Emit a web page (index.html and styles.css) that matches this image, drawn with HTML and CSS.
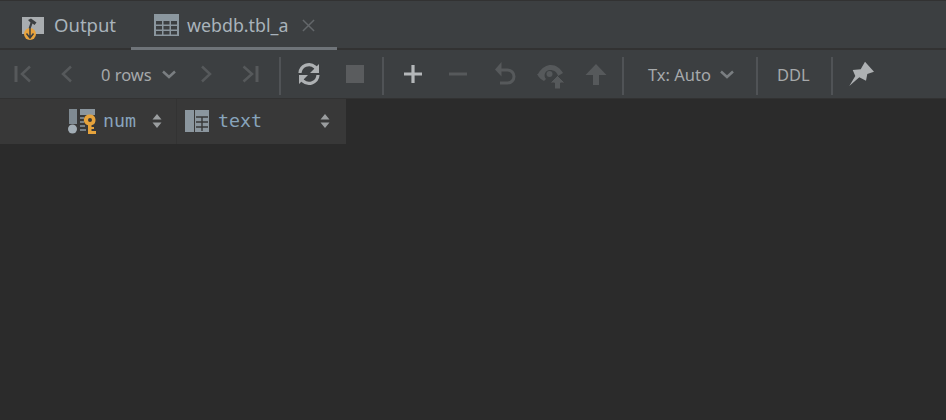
FILE: index.html
```html
<!DOCTYPE html>
<html lang="en">
<head>
<meta charset="utf-8">
<title>webdb.tbl_a</title>
<link rel="stylesheet" href="styles.css">
</head>
<body>
<div class="tabs">
  <div class="tab tab-output">
    <svg class="tab-icon" width="24" height="24" viewBox="0 0 24 24">
      <rect x="1" y="4" width="22" height="17" fill="#a9adb0"/>
      <path d="M7 7l3-1.500 5.500 4-2 2.500-2-1.500-2 5.500-2-.5 2-6z" fill="#3c3f41"/>
      <circle cx="9" cy="21" r="6" fill="#e8a33d"/>
      <path d="M9 15v10M5.500 20.500L9 25l3.500-4.500" fill="none" stroke="#3c3f41" stroke-width="1.500"/>
    </svg>
    <span class="output-label">Output</span>
  </div>
  <div class="tab tab-active">
    <svg class="tab-icon" width="25" height="22" viewBox="0 0 25 22">
      <rect x="0" y="0" width="25" height="22" fill="#8b979f"/>
      <g fill="#3c3f41">
        <rect x="2" y="7" width="6" height="3.500"/><rect x="9.500" y="7" width="6" height="3.500"/><rect x="17" y="7" width="6" height="3.500"/>
        <rect x="2" y="12" width="6" height="3.500"/><rect x="9.500" y="12" width="6" height="3.500"/><rect x="17" y="12" width="6" height="3.500"/>
        <rect x="2" y="17" width="6" height="3.500"/><rect x="9.500" y="17" width="6" height="3.500"/><rect x="17" y="17" width="6" height="3.500"/>
      </g>
    </svg>
    <span>webdb.tbl_a</span>
    <svg class="tab-close" width="13" height="13" viewBox="0 0 14 14"><path d="M1 1l12 12M13 1L1 13" stroke="#63676a" stroke-width="1.600" fill="none"/></svg>
  </div>
</div>
<div class="toolbar">
  <div class="btn"><svg width="20" height="20" viewBox="0 0 20 20"><path d="M3 2v16" stroke="#56595b" stroke-width="3"/><path d="M17 2.500L9 10l8 7.500" stroke="#56595b" stroke-width="2.500" fill="none"/></svg></div>
  <div class="btn"><svg width="20" height="20" viewBox="0 0 20 20"><path d="M13 2.500L5 10l8 7.500" stroke="#56595b" stroke-width="2.500" fill="none"/></svg></div>
  <div class="rows"><span>0 rows</span><svg class="chev" width="14" height="9" viewBox="0 0 14 9"><path d="M1 1.500l6 5.500 6-5.500" stroke="#7a7e81" stroke-width="2.500" fill="none"/></svg></div>
  <div class="btn"><svg width="20" height="20" viewBox="1 0 20 20"><path d="M6 2.500L14 10l-8 7.500" stroke="#56595b" stroke-width="2.500" fill="none"/></svg></div>
  <div class="btn"><svg width="20" height="20" viewBox="1 0 20 20"><path d="M16 2v16" stroke="#56595b" stroke-width="3"/><path d="M2.500 2.500L11 10l-8.500 7.500" stroke="#56595b" stroke-width="2.500" fill="none"/></svg></div>
  <div class="sep sep-a"></div>
  <div class="btn"><svg width="22" height="22" viewBox="2 1 22 22"><g fill="none" stroke="#aeb1b3" stroke-width="3.200"><path d="M3 11a9 9 0 0 1 15-6l2 2"/><path d="M21 13a9 9 0 0 1-15 6l-2-2"/></g><path d="M22 2v9h-9zM2 22v-9h9z" fill="#aeb1b3"/></svg></div>
  <div class="btn"><div class="stop"></div></div>
  <div class="sep sep-b"></div>
  <div class="btn"><svg width="20" height="20" viewBox="0 0 20 20"><path d="M10 1v18M1 10h18" stroke="#b4b7b9" stroke-width="3.200"/></svg></div>
  <div class="btn"><svg width="20" height="20" viewBox="0 0 20 20"><path d="M1 10h18" stroke="#56595b" stroke-width="3"/></svg></div>
  <div class="btn btn-undo"><svg width="24" height="24" viewBox="1 0 24 24"><path d="M6 8h8.500a6.500 6.500 0 0 1 0 13H7" stroke="#56595b" stroke-width="3" fill="none"/><path d="M8.500 0L2 7.500l6.500 7z" fill="#56595b"/></svg></div>
  <div class="btn"><svg class="over" width="28" height="26" viewBox="0 0 28 26"><path d="M1 13C5 6 10 4 14 4c5 0 9 3 12 8l-5 3c-1-4-4-6-8-6-5 0-7 6-4 9l-2 2c-2-1-5-3-7-7z" fill="#56595b"/><circle cx="12.500" cy="13" r="3" fill="#56595b"/><path d="M20.500 14.500L28 22h-4.500v6h-6v-6H13z" fill="#56595b" stroke="#3c3f41" stroke-width="1"/></svg></div>
  <div class="btn"><svg width="24" height="24" viewBox="0 0 24 24"><path d="M12 2l10.500 11H15v10H9V13H1.500z" fill="#56595b"/></svg></div>
  <div class="sep sep-c"></div>
  <div class="tx"><span>Tx: Auto</span><svg class="chev" width="14" height="9" viewBox="0 0 14 9"><path d="M1 1.500l6 5.500 6-5.500" stroke="#7a7e81" stroke-width="2.500" fill="none"/></svg></div>
  <div class="sep"></div>
  <div class="ddl">DDL</div>
  <div class="sep"></div>
  <div class="btn btn-pin"><svg width="26" height="26" viewBox="0 0 26 26"><path d="M17 .7L26 10.700 19.300 13 18 19.700 11.300 16.300 1.300 25 7.300 15 4.700 9 12.700 8.300z" fill="#aeb1b3"/></svg></div>
</div>
<div class="grid-head">
  <div class="cell cell-num">
    <svg class="over" width="30" height="28" viewBox="0 0 30 28">
      <rect x="2" y="2" width="8" height="15" fill="#7f8a92"/>
      <circle cx="5.500" cy="22" r="4.500" fill="#a2adb5"/>
      <rect x="13" y="2" width="15" height="6" fill="#8b969e"/>
      <path d="M13 11h4M13 15h4M13 19h5M13 23h6" stroke="#8b969e" stroke-width="1.500"/>
      <path fill-rule="evenodd" d="M23 7.500a5.500 5.500 0 0 1 1.500 10.800V20H27v2h-2.500v2H29v3h-8v-8.700A5.500 5.500 0 0 1 23 7.500zm0 3.500a2 2 0 1 0 0 4 2 2 0 0 0 0-4z" fill="#e6a33c"/>
    </svg>
    <span class="name">num</span>
    <svg class="sort" width="10" height="14" viewBox="0 0 10 14"><path d="M5 0l4.500 5.500h-9zM5 14L.5 8.500h9z" fill="#9a9d9f"/></svg>
  </div>
  <div class="cell cell-text">
    <svg width="26" height="22" viewBox="0 0 26 22">
      <rect x="1" y="0" width="9" height="22" fill="#8b969e"/>
      <rect x="11" y="0" width="14" height="22" fill="#8b969e"/>
      <path d="M12 7h12M12 12h12M12 17h12M18 7v14" stroke="#383838" stroke-width="1.400"/>
    </svg>
    <span class="name">text</span>
    <svg class="sort" width="10" height="14" viewBox="0 0 10 14"><path d="M5 0l4.500 5.500h-9zM5 14L.5 8.500h9z" fill="#9a9d9f"/></svg>
  </div>
</div>
</body>
</html>
```

FILE: styles.css
```css
* { box-sizing: border-box; }
html, body { margin: 0; height: 100%; }
body {
  background: #2b2b2b;
  font-family: "Noto Sans", "Open Sans", sans-serif;
  color: #a9b7c6;
  overflow: hidden;
}
svg { overflow: visible; flex: none; }
.tabs {
  height: 50px;
  background: #3c3f41;
  border-top: 1px solid #323232;
  border-bottom: 2px solid #323232;
  display: flex;
  font-size: 17.8px;
}
.output-label { font-size: 18.5px; }
.tab {
  display: flex;
  align-items: center;
  height: 47px;
  color: #a9b3bb;
}
.tab-output { width: 131px; padding-left: 21px; gap: 9px; }
.tab-active {
  width: 206px;
  padding-left: 23px;
  gap: 8px;
  box-shadow: inset 0 -3px 0 #6f7479;
  height: 49px;
  padding-bottom: 2px;
  margin-bottom: -2px;
}
.tab-close { margin-left: 6px; margin-top: 2px; }
.toolbar {
  height: 49px;
  background: #3c3f41;
  border-bottom: 1px solid #323232;
  display: flex;
  align-items: center;
  font-size: 16.5px;
  color: #a6a9ab;
}
.btn {
  width: 45px;
  height: 48px;
  flex: none;
  display: flex;
  align-items: center;
  justify-content: center;
}
.rows {
  width: 94px;
  flex: none;
  display: flex;
  align-items: center;
  padding-left: 11px;
  gap: 10px;
}
.sep {
  width: 2px;
  height: 38px;
  flex: none;
  background: #505356;
  align-self: flex-start;
  margin-top: 7px;
}
.sep-a, .sep-b { margin-left: 5px; margin-right: 6px; }
.sep-c { margin-left: 4px; margin-right: 24px; }
.btn-undo { margin-left: 3px; }
.stop { width: 18px; height: 18px; background: #5a5c5e; }
.tx {
  width: 108px;
  display: flex;
  align-items: center;
  gap: 9px;
  flex: none;
  white-space: nowrap;
}
.ddl { width: 32px; flex: none; margin: 0 22px 0 19px; text-align: center; }
.btn-pin { margin-left: 5px; }
.grid-head {
  display: flex;
  height: 45px;
  font-family: "DejaVu Sans Mono", monospace;
  font-size: 18.3px;
  color: #88a4bc;
}
.cell {
  background: #383838;
  display: flex;
  align-items: center;
  padding-bottom: 2px;
}
.cell-num {
  width: 177px;
  padding-left: 67px;
  border-right: 1px solid #333;
}
.cell-text {
  width: 169px;
  padding-left: 7px;
}
.cell-num .name { margin-left: 6px; width: 49px; }
.cell-text .name { margin-left: 8px; width: 102px; }
```
